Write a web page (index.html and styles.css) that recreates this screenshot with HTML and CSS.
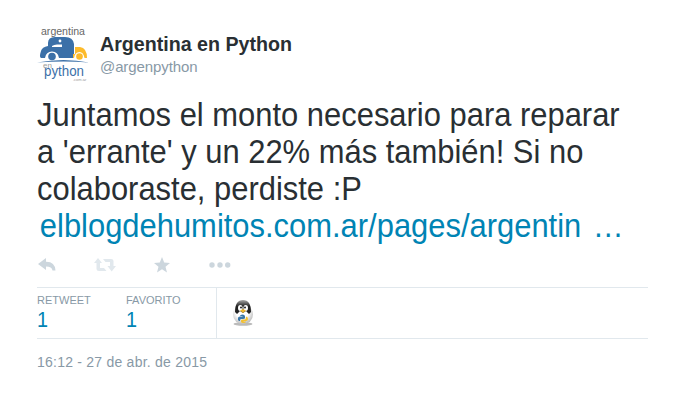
FILE: index.html
```html
<!DOCTYPE html>
<html lang="es">
<head>
<meta charset="utf-8">
<title>Argentina en Python</title>
<link rel="stylesheet" href="styles.css">
</head>
<body>
<article class="tweet">
  <header class="author">
    <svg class="avatar" width="54" height="56" viewBox="0 0 54 56">
      <text x="4" y="8.500" class="logo-top" textLength="44" lengthAdjust="spacingAndGlyphs">argentina</text>
      <path d="M11 20V17Q11 11 18 11H28Q36 11 37 18V32H22Q21 25.500 15 25.500Q9 25.500 8 32H4Q2 31 4 25Q5 21 11 20Z" fill="#3b70a8"/>
      <path d="M15 21V20Q17 18.500 20 18.500H25V21Z" fill="#fff"/>
      <circle cx="23" cy="15" r="1.400" fill="#fff"/>
      <circle cx="15" cy="30.500" r="3.800" fill="#3b70a8"/>
      <path d="M38 21H43Q50 22 50 32H47.500Q46.500 26 42.500 26Q38 26 37 32H36V28H38Z" fill="#fdbb2c"/>
      <circle cx="42.500" cy="30.500" r="3.300" fill="#fdbb2c"/>
      <path d="M0 36.500Q27 31.500 52 36.500Q27 34.500 0 36.500Z" fill="#3b70a8"/>
      <text x="6" y="41.500" class="logo-en">en</text>
      <text x="7" y="50" class="logo-python" textLength="40" lengthAdjust="spacingAndGlyphs">python</text>
      <text x="36" y="54.500" class="logo-domain">.com.ar</text>
    </svg>
    <div class="identity">
      <strong class="name">Argentina en Python</strong>
      <span class="handle">@argenpython</span>
    </div>
  </header>
  <p class="message">
    <span class="line">Juntamos el monto necesario para reparar</span>
    <span class="line">a 'errante' y un 22% más también! Si no</span>
    <span class="line">colaboraste, perdiste :P</span>
    <a class="line link">elblogdehumitos.com.ar/pages/argentin <span class="dots">…</span></a>
  </p>
  <div class="actions">
    <svg width="18" height="14" viewBox="0 0 18 14"><path d="M0 6L8 0V3.700Q17 3.500 17.500 12.500H14.500Q14 8.500 8 8.500V12Z"/></svg>
    <svg class="retweet" width="22" height="14" viewBox="0 0 22 14"><path d="M4 0L8 5H6V10H10L12.500 13H5Q2.500 13 2.500 11V5H0ZM9 1H17Q19.500 1 19.500 3V8H22L17.700 13.500L13.500 8H16V4H11.500Z"/></svg>
    <svg class="star" width="16" height="16" viewBox="0 0 16 16"><path d="M8 0L10.200 5.600L16 6L11.500 9.700L13 15.500L8 12.300L3 15.500L4.500 9.700L0 6L5.800 5.600Z"/></svg>
    <svg class="more" width="22" height="6" viewBox="0 0 22 6"><circle cx="3" cy="3" r="2.700"/><circle cx="11" cy="3" r="2.700"/><circle cx="18.700" cy="3" r="2.700"/></svg>
  </div>
  <div class="stats">
    <div class="stat"><span class="label">RETWEET</span><span class="count">1</span></div>
    <div class="stat"><span class="label">FAVORITO</span><span class="count">1</span></div>
    <div class="people">
      <svg width="22" height="28" viewBox="0 0 22 28">
        <defs>
          <radialGradient id="shell" cx=".45" cy=".35" r=".65"><stop offset=".5" stop-color="#fff"/><stop offset="1" stop-color="#b8b8b8"/></radialGradient>
          <linearGradient id="head" x1="0" y1="0" x2="0" y2="1"><stop offset="0" stop-color="#aaa"/><stop offset=".45" stop-color="#222"/></linearGradient>
        </defs>
        <ellipse cx="11" cy="24" rx="9.500" ry="1.800" fill="#bbb"/>
        <circle cx="11" cy="14.500" r="10" fill="url(#shell)"/>
        <path d="M3 12Q3 0 11 0T19 12L17 14L14 11L11 13L8 11L5 14Z" fill="url(#head)"/>
        <ellipse cx="8.300" cy="8" rx="2.300" ry="3" fill="#fff"/><ellipse cx="13.700" cy="8" rx="2.300" ry="3" fill="#fff"/>
        <circle cx="9" cy="7.500" r="1" fill="#222"/><circle cx="13" cy="7.500" r="1" fill="#222"/>
        <path d="M8 10.500L11 9L14 10.500L11 13Z" fill="#efb72e"/>
        <path d="M6 20V18Q6 16.500 8 16.500H10.500V16H8Q8 14.500 10.500 14.500Q13 14.500 13 16.500V18Q13 19 11 19H9Q8 19 8 21H7Z" fill="#3976a8"/>
        <path d="M14 16.500Q16 16.500 16 19Q16 21 14 21H11.500V21.500H14Q14 23 11.500 23Q9 23 9 21.500V20.500Q9 19.500 11 19.500H13Q14 19 14 16.500Z" fill="#f4c030"/>
      </svg>
    </div>
  </div>
  <time class="date">16:12 - 27 de abr. de 2015</time>
</article>
</body>
</html>
```
FILE: styles.css
```css
body {
  margin: 0;
  background: #fff;
  color: #292f33;
  font-family: "Liberation Sans", Arial, sans-serif;
}
.tweet {
  display: flex;
  flex-direction: column;
  width: 611px;
  padding: 26px 37px 0;
}
.author { display: flex; height: 56px; }
.avatar { flex: none; }
.logo-top { font-size: 10.500px; fill: #666; }
.logo-en { font-size: 8px; fill: #999; }
.logo-python { font-size: 14px; fill: #3b70a8; }
.logo-domain { font-size: 4px; fill: #999; }
.identity { display: flex; flex-direction: column; padding: 6px 0 0 9px; }
.name {
  font-size: 20px;
  line-height: 24px;
  white-space: nowrap;
  transform: scaleX(0.982);
  transform-origin: left;
}
.handle { font-size: 15px; line-height: 22px; letter-spacing: -0.1px; color: #8899a6; }
.message {
  display: flex;
  flex-direction: column;
  margin: 14px 0 0;
  font-size: 33px;
  line-height: 37px;
}
.line {
  white-space: nowrap;
  transform: scaleX(0.937);
  transform-origin: left;
}
.link { padding-left: 3px; color: #0084b4; }
.dots { margin-left: 3px; }
.actions {
  display: flex;
  align-items: center;
  height: 30px;
  padding: 6px 0 7px 2px;
  box-sizing: border-box;
  margin-top: 6px;
  fill: #ccd6dd;
}
.actions svg:first-child { margin-left: -1px; }
.retweet { margin-left: 38px; fill: #e1e8ed; }
.star { margin-left: 38px; }
.more { margin-left: 39px; }
.stats {
  display: flex;
  height: 50px;
  margin-top: 7px;
  border-top: 1px solid #e1e8ed;
  border-bottom: 1px solid #e1e8ed;
}
.stat { display: flex; flex-direction: column; width: 89px; padding-top: 5px; }
.stat + .stat { width: 90px; }
.label { font-size: 11px; line-height: 14px; color: #8899a6; }
.count { font-size: 22px; line-height: 26px; color: #0084b4; transform: scaleX(0.9); transform-origin: left; }
.people { border-left: 1px solid #e1e8ed; padding: 12px 0 0 15px; }
.date { margin-top: 14px; font-size: 14px; line-height: 18px; letter-spacing: 0.23px; color: #8899a6; }
```
